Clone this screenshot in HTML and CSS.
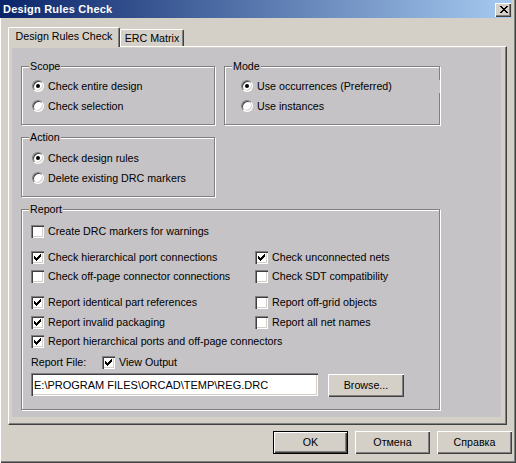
FILE: index.html
```html
<!DOCTYPE html>
<html lang="en">
<head>
<meta charset="utf-8">
<title>Design Rules Check</title>
<link rel="stylesheet" href="styles.css">
</head>
<body>
<div class="window">
  <div class="titlebar">
    <span class="title">Design Rules Check</span>
    <button class="close" aria-label="Close">
      <svg width="8" height="7" viewBox="0 0 8 7"><path d="M0 0h2v1H0zM6 0h2v1H6zM1 1h2v1H1zM5 1h2v1H5zM2 2h4v1H2zM3 3h2v1H3zM2 4h4v1H2zM1 5h2v1H1zM5 5h2v1H5zM0 6h2v1H0zM6 6h2v1H6z" fill="#000"/></svg>
    </button>
  </div>
  <div class="client">
    <div class="tabs">
      <div class="tab active">Design Rules Check</div>
      <div class="tab">ERC Matrix</div>
    </div>
    <div class="panel">
      <div class="page">
        <div class="top-row">
          <div class="left-col">
            <div class="group scope">
              <span class="legend">Scope</span>
              <div class="opt"><span class="radio on"></span><span>Check entire design</span></div>
              <div class="opt"><span class="radio"></span><span>Check selection</span></div>
            </div>
            <div class="group action">
              <span class="legend">Action</span>
              <div class="opt"><span class="radio on"></span><span>Check design rules</span></div>
              <div class="opt"><span class="radio"></span><span>Delete existing DRC markers</span></div>
            </div>
          </div>
          <div class="group mode">
            <span class="legend">Mode</span>
            <div class="opt"><span class="radio on"></span><span class="overhang">Use occurrences (Preferred)</span></div>
            <div class="opt"><span class="radio"></span><span>Use instances</span></div>
          </div>
        </div>
        <div class="group report">
          <span class="legend">Report</span>
          <div class="opt"><span class="cb"></span><span>Create DRC markers for warnings</span></div>
          <div class="pair p1">
            <div class="opt"><span class="cb on"><svg width="7" height="7" viewBox="0 0 7 7"><path d="M6 0h1v1H6zM5 1h2v1H5zM0 2h1v1H0zM4 2h3v1H4zM0 3h2v1H0zM3 3h3v1H3zM0 4h5v1H0zM1 5h3v1H1zM2 6h1v1H2z" fill="#000"/></svg></span><span>Check hierarchical port connections</span></div>
            <div class="opt"><span class="cb on"><svg width="7" height="7" viewBox="0 0 7 7"><path d="M6 0h1v1H6zM5 1h2v1H5zM0 2h1v1H0zM4 2h3v1H4zM0 3h2v1H0zM3 3h3v1H3zM0 4h5v1H0zM1 5h3v1H1zM2 6h1v1H2z" fill="#000"/></svg></span><span>Check unconnected nets</span></div>
            <div class="opt"><span class="cb"></span><span>Check off-page connector connections</span></div>
            <div class="opt"><span class="cb"></span><span>Check SDT compatibility</span></div>
          </div>
          <div class="pair p2">
            <div class="opt"><span class="cb on"><svg width="7" height="7" viewBox="0 0 7 7"><path d="M6 0h1v1H6zM5 1h2v1H5zM0 2h1v1H0zM4 2h3v1H4zM0 3h2v1H0zM3 3h3v1H3zM0 4h5v1H0zM1 5h3v1H1zM2 6h1v1H2z" fill="#000"/></svg></span><span>Report identical part references</span></div>
            <div class="opt"><span class="cb"></span><span>Report off-grid objects</span></div>
            <div class="opt"><span class="cb on"><svg width="7" height="7" viewBox="0 0 7 7"><path d="M6 0h1v1H6zM5 1h2v1H5zM0 2h1v1H0zM4 2h3v1H4zM0 3h2v1H0zM3 3h3v1H3zM0 4h5v1H0zM1 5h3v1H1zM2 6h1v1H2z" fill="#000"/></svg></span><span>Report invalid packaging</span></div>
            <div class="opt"><span class="cb"></span><span>Report all net names</span></div>
          </div>
          <div class="opt"><span class="cb on"><svg width="7" height="7" viewBox="0 0 7 7"><path d="M6 0h1v1H6zM5 1h2v1H5zM0 2h1v1H0zM4 2h3v1H4zM0 3h2v1H0zM3 3h3v1H3zM0 4h5v1H0zM1 5h3v1H1zM2 6h1v1H2z" fill="#000"/></svg></span><span>Report hierarchical ports and off-page connectors</span></div>
          <div class="file-row">
            <span class="file-label">Report File:</span>
            <div class="opt"><span class="cb on"><svg width="7" height="7" viewBox="0 0 7 7"><path d="M6 0h1v1H6zM5 1h2v1H5zM0 2h1v1H0zM4 2h3v1H4zM0 3h2v1H0zM3 3h3v1H3zM0 4h5v1H0zM1 5h3v1H1zM2 6h1v1H2z" fill="#000"/></svg></span><span>View Output</span></div>
          </div>
          <div class="path-row">
            <input class="path" type="text" value="E:\PROGRAM FILES\ORCAD\TEMP\REG.DRC" readonly>
            <button class="btn browse">Browse...</button>
          </div>
        </div>
      </div>
    </div>
    <div class="buttons">
      <button class="btn default">OK</button>
      <button class="btn">Отмена</button>
      <button class="btn">Справка</button>
    </div>
  </div>
</div>
</body>
</html>
```
FILE: styles.css
```css
* { box-sizing: border-box; }
html, body { margin: 0; padding: 0; }
body {
  width: 516px;
  height: 463px;
  overflow: hidden;
  background: #d4d0c8;
  font-family: "Liberation Sans", Arial, sans-serif;
  font-size: 10.7px;
  line-height: 13px;
  color: #000;
}
button, input {
  font-family: "Liberation Sans", Arial, sans-serif;
  font-size: 10.7px;
  line-height: 13px;
  color: #000;
  margin: 0;
}
.window {
  width: 516px;
  height: 463px;
  display: flex;
  flex-direction: column;
  background: #d4d0c8;
  box-shadow: inset -1px -1px 0 #404040, inset -2px -2px 0 #808080;
}
.titlebar {
  width: 512px;
  height: 18px;
  flex: none;
  display: flex;
  align-items: flex-start;
  padding: 0 1px 0 3px;
  background: linear-gradient(to right, #0a246a, #a6caf0);
  color: #fff;
}
.title {
  font-weight: bold;
  font-size: 11px;
  letter-spacing: 0.2px;
  line-height: 18px;
  white-space: nowrap;
}
.close {
  margin-left: auto;
  margin-top: 3px;
  width: 16px;
  height: 14px;
  padding: 0 0 1px 1px;
  border: none;
  background: #d4d0c8;
  display: flex;
  align-items: center;
  justify-content: center;
  box-shadow: inset 1px 1px 0 #fff, inset -1px -1px 0 #404040, inset -2px -2px 0 #808080;
}
.close svg { display: block; }
.client {
  flex: 1;
  display: flex;
  flex-direction: column;
  padding: 9px 4px 0 8px;
  box-shadow: inset 1px 0 0 #fff;
}
.tabs {
  height: 19px;
  display: flex;
  align-items: flex-end;
  flex: none;
}
.tab {
  height: 17px;
  width: 64px;
  padding-top: 2px;
  text-align: center;
  white-space: nowrap;
  background: #d4d0c8;
  border-top: 1px solid #fff;
  border-left: 1px solid #fff;
  border-right: 1px solid #404040;
  border-radius: 2px 2px 0 0;
  box-shadow: inset -1px 0 0 #808080;
}
.tab.active {
  position: relative;
  z-index: 1;
  width: 112px;
  height: 20px;
  margin-bottom: -1px;
  padding-top: 2px;
}
.panel {
  width: 499px;
  height: 379px;
  flex: none;
  border-style: solid;
  border-width: 1px;
  border-color: #fff #404040 #404040 #fff;
  box-shadow: inset -1px -1px 0 #808080;
  padding: 1px 5px 7px 3px;
  background: #d4d0c8;
}
.page {
  height: 100%;
  background: #c6c3c6;
  padding: 18px 0 0 9px;
}
.top-row {
  display: flex;
  align-items: flex-start;
}
.left-col {
  width: 194px;
  display: flex;
  flex-direction: column;
  gap: 12px;
}
.group {
  position: relative;
  border: 1px solid #808080;
  box-shadow: inset 1px 1px 0 #fff, 1px 1px 0 #fff;
}
.legend {
  position: absolute;
  top: -7px;
  left: 7px;
  padding: 0 1px;
  background: #c6c3c6;
  line-height: 13px;
  white-space: nowrap;
}
.scope { height: 59px; padding: 9px 0 0 10px; }
.action { height: 60px; padding: 10px 0 0 10px; }
.mode { width: 216px; height: 59px; margin-left: 9px; padding: 9px 0 0 16px; }
.report { width: 419px; height: 201px; margin-top: 12px; padding: 11px 0 0 9px; }
.opt {
  height: 20px;
  display: flex;
  align-items: center;
  gap: 4px;
  white-space: nowrap;
}
.overhang {
  flex: 1;
  height: 13px;
  margin-right: -1px;
  background: #c6c3c6;
  position: relative;
}
.radio {
  flex: none;
  width: 12px;
  height: 12px;
  border-radius: 50%;
  background: #fff;
  border: 1px solid;
  border-color: #808080 #fff #fff #808080;
  box-shadow: inset 1px 1px 0 #404040, inset -1px -1px 0 #d4d0c8;
  display: flex;
  align-items: center;
  justify-content: center;
}
.radio.on::after {
  content: "";
  width: 4px;
  height: 4px;
  border-radius: 50%;
  background: #000;
}
.cb {
  flex: none;
  width: 13px;
  height: 13px;
  background: #fff;
  box-shadow: inset 1px 1px 0 #808080, inset 2px 2px 0 #404040, inset -1px -1px 0 #fff, inset -2px -2px 0 #d4d0c8;
  display: flex;
  align-items: center;
  justify-content: center;
}
.cb svg { display: block; }
.pair {
  display: grid;
  grid-template-columns: 224px auto;
  margin-top: 6px;
}
.p1 { grid-template-rows: 19px 20px; }
.p2 { grid-template-rows: 20px 19px; }
.file-row {
  height: 22px;
  display: flex;
  align-items: center;
}
.file-label { width: 71px; }
.path-row {
  display: flex;
  align-items: flex-start;
  height: 24px;
}
.path {
  width: 287px;
  height: 23px;
  margin-right: 10px;
  padding: 0 3px;
  border: none;
  outline: none;
  font-size: 11px;
  background: #fff;
  box-shadow: inset 1px 1px 0 #808080, inset 2px 2px 0 #404040, inset -1px -1px 0 #fff, inset -2px -2px 0 #d4d0c8;
}
.btn {
  width: 75px;
  height: 23px;
  padding: 0;
  border: none;
  background: #d4d0c8;
  text-align: center;
  box-shadow: inset 1px 1px 0 #fff, inset -1px -1px 0 #404040, inset -2px -2px 0 #808080;
}
.browse { width: 76px; margin-top: 1px; }
.btn.default {
  border: 1px solid #000;
}
.buttons {
  display: flex;
  justify-content: flex-end;
  gap: 7px;
  margin-top: 6px;
}
```
